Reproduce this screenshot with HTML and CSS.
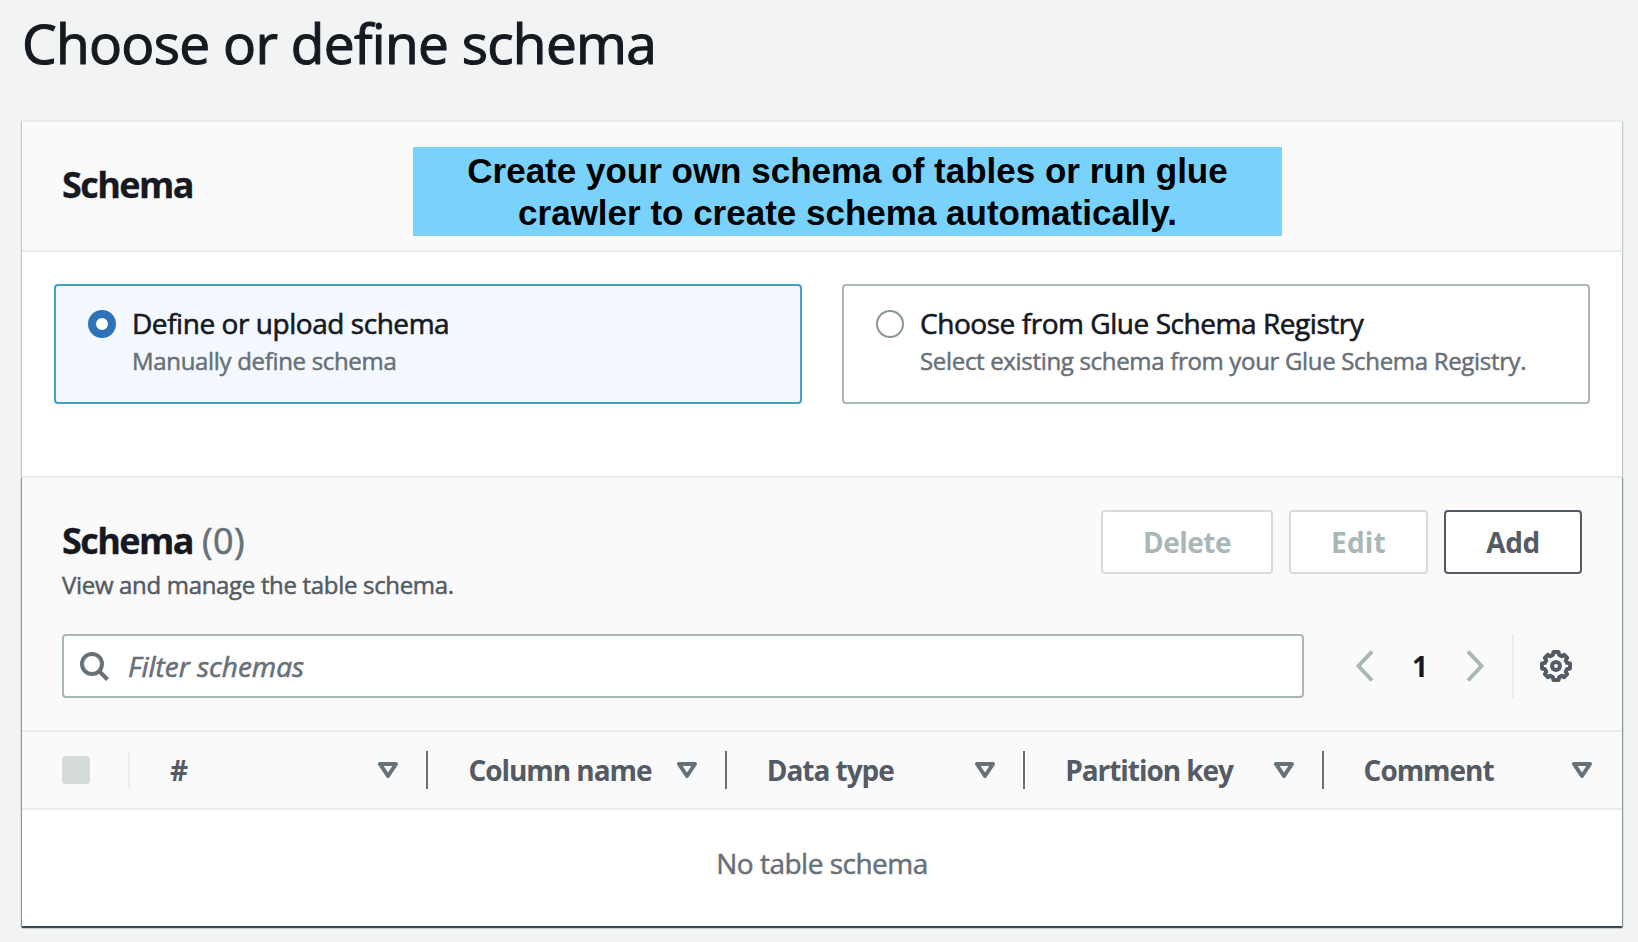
FILE: index.html
```html
<!DOCTYPE html>
<html lang="en">
<head>
<meta charset="utf-8">
<title>Choose or define schema</title>
<link rel="stylesheet" href="styles.css">
</head>
<body>
<svg class="sprite" width="0" height="0" aria-hidden="true">
  <symbol id="sort" viewBox="0 0 20 16"><path d="M2 2H18L10 14Z" fill="none" stroke="currentColor" stroke-width="4" stroke-linejoin="round"/></symbol>
</svg>
<h1 class="page-title">Choose or define schema</h1>
<main class="card">
  <header class="card-header">
    <h2 class="heading">Schema</h2>
    <p class="note">Create your own schema of tables or run glue<br>crawler to create schema automatically.</p>
  </header>
  <section class="tiles">
    <label class="tile tile-selected">
      <span class="radio radio-on"></span>
      <span class="tile-text"><span class="tile-label">Define or upload schema</span><span class="tile-desc">Manually define schema</span></span>
    </label>
    <label class="tile">
      <span class="radio"></span>
      <span class="tile-text"><span class="tile-label">Choose from Glue Schema Registry</span><span class="tile-desc">Select existing schema from your Glue Schema Registry.</span></span>
    </label>
  </section>
  <section class="panel">
    <div class="panel-header">
      <div class="panel-title">
        <h2 class="heading">Schema <span class="count">(0)</span></h2>
        <p class="panel-desc">View and manage the table schema.</p>
      </div>
      <div class="actions">
        <button class="btn btn-delete" disabled>Delete</button>
        <button class="btn btn-edit" disabled>Edit</button>
        <button class="btn btn-add">Add</button>
      </div>
    </div>
    <div class="toolbar">
      <div class="search">
        <svg class="search-icon" width="32" height="32" viewBox="0 0 32 32"><g fill="none" stroke="currentColor" stroke-width="4"><circle cx="14" cy="14" r="10"/><path d="M21 21l8.5 8.5"/></g></svg>
        <span class="placeholder">Filter schemas</span>
      </div>
      <div class="pager">
        <svg width="18" height="32" viewBox="0 0 18 32"><path d="M16 1.5L2.5 16L16 30.5" fill="none" stroke="currentColor" stroke-width="4"/></svg>
        <span class="page">1</span>
        <svg width="18" height="32" viewBox="0 0 18 32"><path d="M2 1.5L15.5 16L2 30.5" fill="none" stroke="currentColor" stroke-width="4"/></svg>
      </div>
      <div class="settings">
        <svg width="32" height="32" viewBox="-16 -16 32 32"><g fill="none" stroke="currentColor" stroke-width="4" stroke-linejoin="round"><path d="M-2.5 -14H2.5L3.2 -11L5.8 -9.7L8.2 -11.2L11.2 -8.2L9.7 -5.8L11 -3.2L14 -2.5V2.5L11 3.2L9.7 5.8L11.2 8.2L8.2 11.2L5.8 9.7L3.2 11L2.5 14H-2.5L-3.2 11L-5.8 9.7L-8.2 11.2L-11.2 8.2L-9.7 5.8L-11 3.2L-14 2.5V-2.5L-11 -3.2L-9.7 -5.8L-11.2 -8.2L-8.2 -11.2L-5.8 -9.7L-3.2 -11Z"/><circle r="4"/></g></svg>
      </div>
    </div>
    <div class="thead">
      <div class="th-check"><span class="checkbox"></span></div>
      <div class="th"><span>#</span><svg width="20" height="16"><use href="#sort"/></svg></div>
      <div class="th"><span>Column name</span><svg width="20" height="16"><use href="#sort"/></svg></div>
      <div class="th"><span>Data type</span><svg width="20" height="16"><use href="#sort"/></svg></div>
      <div class="th"><span>Partition key</span><svg width="20" height="16"><use href="#sort"/></svg></div>
      <div class="th"><span>Comment</span><svg width="20" height="16"><use href="#sort"/></svg></div>
    </div>
    <div class="empty">No table schema</div>
  </section>
</main>
</body>
</html>
```
FILE: styles.css
```css
* { box-sizing: border-box; }
body {
  margin: 0;
  height: 942px;
  overflow: hidden;
  padding: 13px 16px 0 22px;
  background: #f2f3f3;
  color: #16191f;
  font-family: "Open Sans", "Noto Sans", sans-serif;
}
h1, h2, p { margin: 0; }
svg { display: block; flex: none; }
.sprite { position: absolute; }
.page-title {
  height: 107px;
  line-height: 60px;
  font-size: 55px;
  font-weight: 400;
  letter-spacing: -0.7px;
  -webkit-text-stroke: 1.1px;
}
.card {
  width: 1600px;
  height: 806px;
  border-top: 2px solid #eaeded;
  background: #fff;
  box-shadow: 1px 1px 1px rgba(0, 28, 36, .2), -1px 1px 1px rgba(0, 28, 36, .2);
}
.card-header {
  position: relative;
  height: 130px;
  padding: 41px 40px 0;
  border-bottom: 2px solid #eaeded;
  background: #fafafa;
}
.heading {
  line-height: 44px;
  font-size: 36px;
  font-weight: 700;
  letter-spacing: -1.55px;
  -webkit-text-stroke: 0.3px;
}
.count {
  margin-left: 1px;
  font-weight: 400;
  color: #687078;
  letter-spacing: 0.4px;
  -webkit-text-stroke: 0.6px;
}
.note {
  position: absolute;
  left: 391px;
  top: 24.5px;
  width: 869px;
  height: 89px;
  padding-top: 3.5px;
  background: #79d2fb;
  color: #000;
  text-align: center;
  font: 700 35px/42px "Liberation Sans", Arial, sans-serif;
}
.tiles {
  display: grid;
  grid-template-columns: 1fr 1fr;
  gap: 40px;
  height: 224px;
  padding: 32px 32px 72px;
}
.tile {
  display: flex;
  gap: 16px;
  padding: 21px 32px 0;
  border: 2px solid #aab7b8;
  border-radius: 4px;
}
.tile-selected {
  border-color: #44a0c8;
  background: #f3f9fe;
}
.radio {
  flex: none;
  width: 28px;
  height: 28px;
  margin-top: 3px;
  border: 2px solid #879596;
  border-radius: 50%;
  background: #fff;
}
.radio-on { border: 8px solid #3072ba; }
.tile-text { display: flex; flex-direction: column; gap: 6px; white-space: nowrap; }
.tile-label { font-size: 28px; line-height: 32px; letter-spacing: -0.45px; -webkit-text-stroke: 0.6px; }
.tile-desc { font-size: 24px; line-height: 32px; letter-spacing: -0.32px; color: #687078; -webkit-text-stroke: 0.5px; }
.panel {
  height: 450px;
  border-top: 2px solid #eaeded;
  background: #fafafa;
  box-shadow: 0 2px 1px rgba(20, 38, 52, .62), 1px 2px 1px rgba(20, 38, 52, .25), -1px 2px 1px rgba(20, 38, 52, .25);
}
.panel-header {
  display: flex;
  justify-content: space-between;
  height: 156px;
  padding: 32px 40px 0;
}
.panel-title { padding-top: 9px; }
.panel-desc { margin-top: 6px; font-size: 24px; line-height: 32px; letter-spacing: -0.32px; color: #545b64; -webkit-text-stroke: 0.5px; }
.actions { display: flex; gap: 16px; }
.btn {
  height: 64px;
  padding: 0;
  border: 2px solid #545b64;
  border-radius: 4px;
  background: #fff;
  color: #545b64;
  font: 700 28px/56px "Open Sans", "Noto Sans", sans-serif;
  letter-spacing: -0.5px;
}
.btn:disabled { border-color: #d5dbdb; color: #aab7b8; }
.btn-delete { width: 172px; }
.btn-edit { width: 139px; letter-spacing: 0.2px; }
.btn-add { width: 138px; }
.toolbar {
  display: flex;
  height: 96px;
  padding: 0 40px 32px;
}
.search {
  display: flex;
  align-items: center;
  width: 1242px;
  padding-left: 14px;
  border: 2px solid #aab7b8;
  border-radius: 4px;
  background: #fff;
  color: #687078;
}
.placeholder { margin-left: 18px; font-size: 28px; line-height: 32px; font-style: italic; letter-spacing: 0; -webkit-text-stroke: 0.6px; }
.pager {
  display: flex;
  align-items: center;
  justify-content: space-between;
  width: 208px;
  padding: 0 28px 0 52px;
  color: #aab7b8;
}
.page { color: #16191f; font-size: 28px; font-weight: 700; }
.settings {
  display: flex;
  align-items: center;
  padding-left: 26px;
  border-left: 2px solid #eaeded;
  color: #545b64;
}
.thead {
  display: grid;
  grid-template-columns: 108px repeat(5, 1fr);
  align-items: center;
  height: 80px;
  border-top: 2px solid #eaeded;
  border-bottom: 2px solid #eaeded;
  color: #545b64;
}
.th-check, .th {
  display: flex;
  align-items: center;
  height: 38px;
  border-right: 2px solid #687078;
}
.th-check { padding-left: 40px; border-color: #eaeded; }
.th:last-child { border-color: transparent; }
.checkbox { width: 28px; height: 28px; border-radius: 4px; background: #d5dbdb; }
.th {
  justify-content: space-between;
  padding: 0 28px 0 40px;
  font-size: 28px;
  font-weight: 700;
  line-height: 36px;
  letter-spacing: -1.05px;
  white-space: nowrap;
}
.th svg { color: #687078; }
.empty {
  height: 116px;
  padding-top: 37px;
  background: #fff;
  color: #687078;
  text-align: center;
  font-size: 28px;
  line-height: 32px;
  letter-spacing: -0.5px;
  -webkit-text-stroke: 0.5px;
}
```
